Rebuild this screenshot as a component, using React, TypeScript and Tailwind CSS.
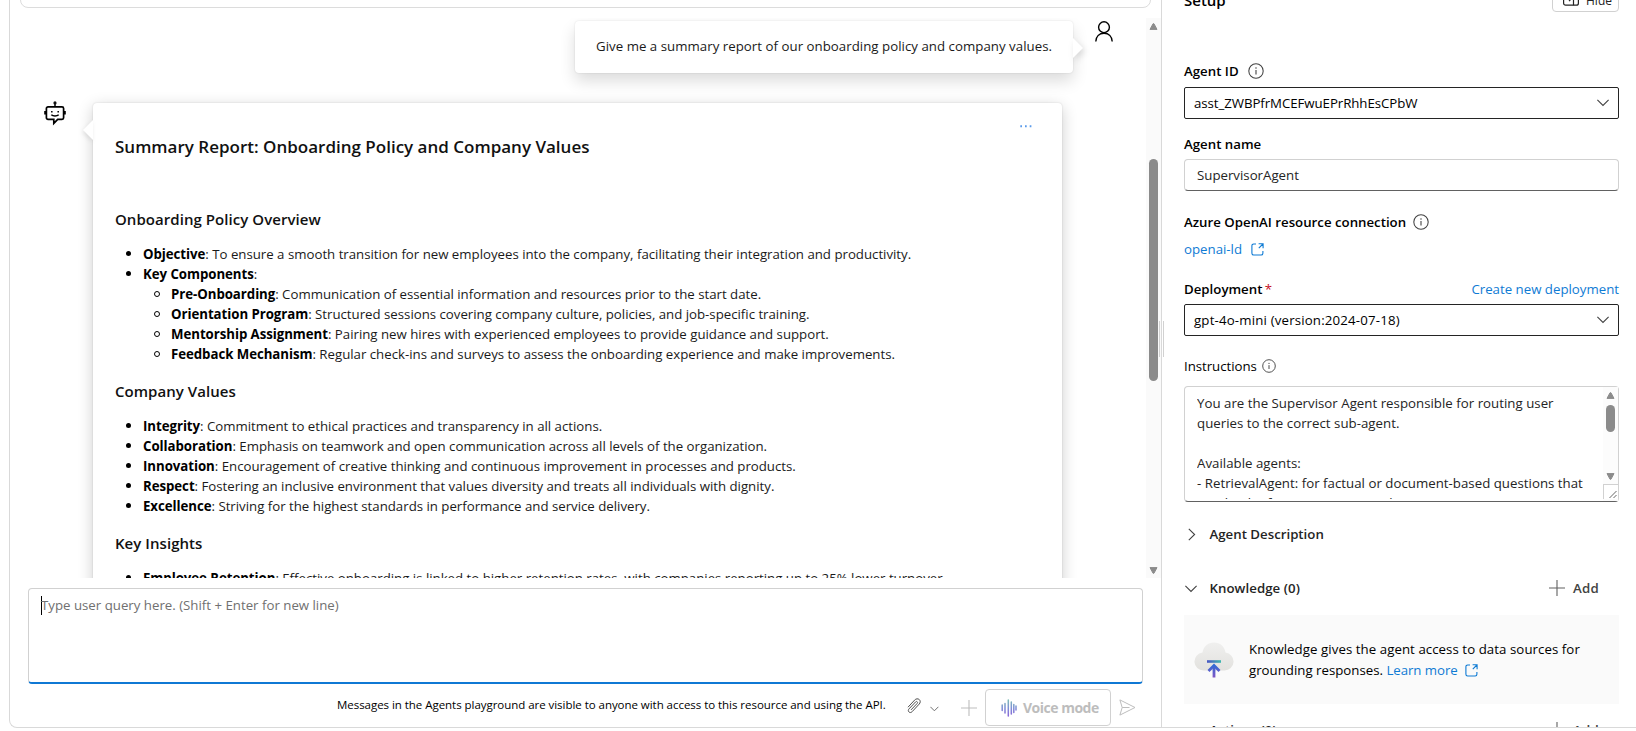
import type { ReactNode } from "react";

function InfoIcon({ size = 16 }: { size?: number }) {
  return (
    <svg width={size} height={size} viewBox="0 0 16 16" fill="none" className="shrink-0">
      <circle cx="8" cy="8" r="7.2" stroke="#424242" strokeWidth="1.05" />
      <path d="M8 7v4.4" stroke="#424242" strokeWidth="1.1" />
      <circle cx="8" cy="4.9" r="0.75" fill="#424242" />
    </svg>
  );
}

function ChevronDown({ className = "" }: { className?: string }) {
  return (
    <svg width="12" height="8" viewBox="0 0 12 8" fill="none" className={`shrink-0 ${className}`}>
      <path d="M0.4 0.9 6 6.5 11.6 0.9" stroke="#424242" strokeWidth="1.1" />
    </svg>
  );
}

function OpenIcon() {
  return (
    <svg width="13" height="13" viewBox="0 0 13 13" fill="none" stroke="#0f7bd4" className="shrink-0">
      <path d="M5 1H2.6A1.7 1.7 0 0 0 .9 2.700v7.600A1.700 1.700 0 0 0 2.600 12h7.600a1.700 1.700 0 0 0 1.700-1.700V8" strokeWidth="1.1" />
      <path d="M7.600 .8h4.500v4.500M11.900 1 7.800 5.100" strokeWidth="1.1" />
    </svg>
  );
}

function PlusIcon({ color }: { color: string }) {
  return (
    <svg width="16" height="16" viewBox="0 0 16 16" fill="none" className="shrink-0">
      <path d="M8 0v16M0 8h16" stroke={color} strokeWidth="1.1" />
    </svg>
  );
}

function Arrow({ down = false }: { down?: boolean }) {
  return (
    <svg width="9" height="7" viewBox="0 0 9 7" className="shrink-0">
      <path
        d={down ? "M1 .6h7L5 6.200H4z" : "M4 .8h1L8 6.400H1z"}
        fill="#8b8b8b"
        stroke="#8b8b8b"
        strokeWidth="1"
        strokeLinejoin="round"
      />
    </svg>
  );
}

function BotIcon() {
  return (
    <svg width="22" height="25" viewBox="0 0 22 25" fill="none" className="shrink-0">
      <path d="M11 6V2" stroke="#111" strokeWidth="1.6" />
      <circle cx="11" cy="1.900" r="1.600" fill="#111" />
      <path
        d="M4 5.900h14a1.600 1.600 0 0 1 1.600 1.600v9.200a1.600 1.600 0 0 1-1.600 1.600h-4.300L9.800 22.300V18.300H4a1.600 1.600 0 0 1-1.600-1.600V7.500A1.600 1.600 0 0 1 4 5.900z"
        stroke="#000"
        strokeWidth="1.700"
      />
      <path d="M1.200 10v3.500M20.800 10v3.500" stroke="#000" strokeWidth="2" />
      <path d="M7.300 13.700c1.800 1.700 5.600 1.700 7.400 0" stroke="#000" strokeWidth="1.500" />
      <path d="M7.800 9.900v1.700M14.200 9.900v1.700" stroke="#000" strokeWidth="1.500" />
    </svg>
  );
}

function PersonIcon() {
  return (
    <svg width="18" height="21" viewBox="0 0 18 21" fill="none" stroke="#000" strokeWidth="1.400" className="shrink-0">
      <circle cx="9" cy="6.200" r="5.400" />
      <path d="M.8 20.500c.2-5 3.500-8.300 8.200-8.300s8 3.300 8.200 8.300" />
    </svg>
  );
}

function Item({ label, text, children }: { label: string; text?: string; children?: ReactNode }) {
  return (
    <li>
      <div className="flex h-5 pl-[11px] whitespace-nowrap">
        <span className="mt-[7px] mr-3 size-[5px] shrink-0 rounded-full bg-black" />
        <Entry label={label} text={text} />
      </div>
      {children}
    </li>
  );
}

function Entry({ label, text }: { label: string; text?: string }) {
  return (
    <p className="tracking-[-0.012px]">
      <b className="font-bold tracking-[-0.05px] text-black">{label}</b>:{text ? ` ${text}` : ""}
    </p>
  );
}

function SubItem({ label, text }: { label: string; text: string }) {
  return (
    <li className="flex h-5 pl-[39px] whitespace-nowrap">
      <span className="mt-[7px] mr-[11px] size-[6px] shrink-0 rounded-full border border-black" />
      <Entry label={label} text={text} />
    </li>
  );
}

function SubHeading({ children }: { children: ReactNode }) {
  return <h3 className="mt-4 mb-3.5 text-[15px] leading-[22px] font-semibold tracking-[0.05px] text-[#111]">{children}</h3>;
}

function Select({ value, className }: { value: string; className: string }) {
  return (
    <div className="flex h-8 items-center justify-between rounded-[2px] border border-[#242424] pr-[9px] pl-[9px] text-black">
      <span className={className}>{value}</span>
      <ChevronDown />
    </div>
  );
}

function Conversation() {
  return (
    <div className="flex h-[560px] overflow-hidden">
      <div className="w-[1136px] overflow-hidden">
        <div className="mt-[3px] flex justify-end pr-[33px]">
          <div className="relative mr-[22px] flex h-[52px] w-[498px] items-center rounded-[4px] bg-white pb-[2px] pl-[21px] tracking-[0.03px] whitespace-nowrap text-[#1a1a1a] shadow-[0_0_2px_rgba(0,0,0,0.12),0_8px_16px_rgba(0,0,0,0.14)]">
            Give me a summary report of our onboarding policy and company values.
            <svg width="10" height="20" viewBox="0 0 10 20" className="absolute top-[17px] left-full drop-shadow-[2px_3px_3px_rgba(0,0,0,0.14)]">
              <path d="M0 0 10 10 0 20z" fill="#fff" />
            </svg>
          </div>
          <PersonIcon />
        </div>
        <div className="mt-[28px] flex pl-[34px]">
          <BotIcon />
          <div className="relative mt-[2px] ml-[27px] h-[600px] w-[969px] rounded-[4px] bg-white px-[22px] pt-8 text-[#1a1a1a] shadow-[0_0_2px_rgba(0,0,0,0.14),0_4px_16px_rgba(0,0,0,0.2)]">
            <svg width="10" height="20" viewBox="0 0 10 20" className="absolute top-[17px] right-full drop-shadow-[-1px_2px_2px_rgba(0,0,0,0.1)]">
              <path d="M10 0 0 10l10 10z" fill="#fff" />
            </svg>
            <svg width="12" height="3" viewBox="0 0 12 3" className="absolute top-[22px] left-[927px]">
              <path d="M.3 .3h1.700v1.900H.3zM5 .3h1.700v1.900H5zM9.700 .3h1.700v1.900H9.700z" fill="#5b9bea" />
            </svg>
            <h2 className="mb-[49px] text-[17px] leading-6 font-semibold text-[#111]">
              Summary Report: Onboarding Policy and Company Values
            </h2>
            <SubHeading>Onboarding Policy Overview</SubHeading>
            <ul>
              <Item
                label="Objective"
                text="To ensure a smooth transition for new employees into the company, facilitating their integration and productivity."
              />
              <Item label="Key Components">
                <ul>
                  <SubItem label="Pre-Onboarding" text="Communication of essential information and resources prior to the start date." />
                  <SubItem label="Orientation Program" text="Structured sessions covering company culture, policies, and job-specific training." />
                  <SubItem label="Mentorship Assignment" text="Pairing new hires with experienced employees to provide guidance and support." />
                  <SubItem
                    label="Feedback Mechanism"
                    text="Regular check-ins and surveys to assess the onboarding experience and make improvements."
                  />
                </ul>
              </Item>
            </ul>
            <SubHeading>Company Values</SubHeading>
            <ul>
              <Item label="Integrity" text="Commitment to ethical practices and transparency in all actions." />
              <Item label="Collaboration" text="Emphasis on teamwork and open communication across all levels of the organization." />
              <Item label="Innovation" text="Encouragement of creative thinking and continuous improvement in processes and products." />
              <Item label="Respect" text="Fostering an inclusive environment that values diversity and treats all individuals with dignity." />
              <Item label="Excellence" text="Striving for the highest standards in performance and service delivery." />
            </ul>
            <SubHeading>Key Insights</SubHeading>
            <ul>
              <Item
                label="Employee Retention"
                text="Effective onboarding is linked to higher retention rates, with companies reporting up to 25% lower turnover"
              />
            </ul>
          </div>
        </div>
      </div>
      <div className="flex w-[15px] flex-col items-center bg-[#fafafa] pt-[5px] pb-1">
        <Arrow />
        <span className="mt-[129px] h-[222px] w-[9px] rounded-full bg-[#8b8b8b]" />
        <span className="grow" />
        <Arrow down />
      </div>
    </div>
  );
}

function VoiceIcon() {
  return (
    <svg width="16" height="18" viewBox="0 0 16 18" className="shrink-0">
      <defs>
        <linearGradient id="voice" x1="0" y1="0" x2="0" y2="18" gradientUnits="userSpaceOnUse">
          <stop offset="0" stopColor="#7cc0b4" />
          <stop offset="0.5" stopColor="#7f8fd6" />
          <stop offset="1" stopColor="#8a63d8" />
        </linearGradient>
      </defs>
      <path
        d="M1.200 6v5.500M4 4.500v9.500M7.300 1v16M10.300 3v12M12.800 5.500v8M15 7v4"
        stroke="url(#voice)"
        strokeWidth="1.500"
        strokeLinecap="round"
      />
    </svg>
  );
}

function Composer() {
  return (
    <div className="mt-[10px] pl-[18px]">
      <div className="flex h-24 w-[1115px] rounded-[4px] border border-[#d1d1d1] border-b-2 border-b-[#0f78d4] pt-[6px] pl-3 text-[#707070]">
        <span className="mt-px -mr-px h-[19px] w-px bg-black" />
        <span>Type user query here. (Shift + Enter for new line)</span>
      </div>
      <div className="mt-[5px] flex h-[37px] items-center">
        <p className="mb-[6px] ml-[309px] w-[550px] text-[11.500px] tracking-[-0.04px] whitespace-nowrap text-black">
          Messages in the Agents playground are visible to anyone with access to this resource and using the API.
        </p>
        <svg width="14" height="16" viewBox="0 0 14 16" fill="none" stroke="#505050" className="mt-[-4px] ml-[20px] shrink-0">
          <path
            d="M1 9.200 7.600 2.100c1.400-1.500 3.400-1.700 4.700-.5s1.200 3.100-.1 4.500l-7.100 7.600c-.9 1-2.200 1.100-3.100.3s-.9-2.100 0-3.100l6.600-7c.5-.5 1.100-.6 1.600-.1s.4 1.100 0 1.600L4 11.900"
            strokeWidth="1"
          />
        </svg>
        <svg width="9" height="6" viewBox="0 0 9 6" fill="none" className="mt-[3px] ml-[9px] shrink-0">
          <path d="M.4 .8 4.400 4.800 8.400 .8" stroke="#707070" />
        </svg>
        <span className="ml-[22px]">
          <PlusIcon color="#bdbdbd" />
        </span>
        <div className="ml-[8px] flex h-[37px] w-[126px] items-center rounded-[4px] border border-[#d1d1d1] pl-[15px] text-[14px] font-bold text-[#bdbdbd]">
          <VoiceIcon />
          <span className="ml-[6px] tracking-[-0.5px] whitespace-nowrap">Voice mode</span>
        </div>
        <svg width="17" height="17" viewBox="0 0 17 17" fill="none" stroke="#bdbdbd" className="ml-[8px] shrink-0">
          <path d="M.9 .9 16 8.500 .9 16.100 3.200 8.500zM3.200 8.500H10.500" strokeLinejoin="round" />
        </svg>
      </div>
    </div>
  );
}

function CloudIcon() {
  return (
    <svg width="40" height="37" viewBox="0 0 40 37" className="shrink-0">
      <defs>
        <linearGradient id="cloud" x1="20" y1="0" x2="20" y2="29" gradientUnits="userSpaceOnUse">
          <stop offset="0" stopColor="#f0f0ef" />
          <stop offset="1" stopColor="#e2e1de" />
        </linearGradient>
        <linearGradient id="bar" x1="13" y1="0" x2="27" y2="0" gradientUnits="userSpaceOnUse">
          <stop offset="0" stopColor="#4a55c4" />
          <stop offset="1" stopColor="#3fb8ae" />
        </linearGradient>
        <linearGradient id="lift" x1="20" y1="22" x2="20" y2="36" gradientUnits="userSpaceOnUse">
          <stop offset="0" stopColor="#2b6bd6" />
          <stop offset="1" stopColor="#8455c4" />
        </linearGradient>
      </defs>
      <path d="M9.500 28.500a9 9 0 0 1-1-17.950C9.300 4.500 14 .5 20 .5s10.700 4 11.500 10.050a9 9 0 0 1-1 17.950z" fill="url(#cloud)" />
      <path d="M13 18.200h14v2.600H13z" fill="url(#bar)" />
      <path d="M14.500 29 20 23.500 25.500 29" fill="none" stroke="url(#lift)" strokeWidth="2.800" />
      <path d="M18.600 24.500h2.800v11h-2.800z" fill="url(#lift)" />
    </svg>
  );
}

function Section({ title, className }: { title: string; className: string }) {
  return (
    <div className={`flex h-5 items-center ${className}`}>
      <ChevronDown className="mt-0.5 ml-px" />
      <span className="ml-[12.500px] font-semibold tracking-[0.05px]">{title}</span>
      <span className="ml-auto">
        <PlusIcon color="#616161" />
      </span>
      <span className="mr-[19px] ml-[8px] w-[27px] font-semibold tracking-[0.3px] text-[#424242]">Add</span>
    </div>
  );
}

function Setup() {
  return (
    <div className="h-[727px] w-[475px] overflow-hidden pl-[22px]">
      <div className="w-[435px] text-[#242424]">
        <div className="-mt-3 flex h-6 items-center justify-between">
          <h1 className="text-[15px] font-semibold text-black">Setup</h1>
          <div className="flex h-6 w-[67px] items-center rounded-[4px] border border-[#d1d1d1] pt-[2px] pl-[10px] text-[12px]">
            <svg width="16" height="14" viewBox="0 0 16 14" fill="none" stroke="#242424" strokeWidth="1.2" className="-mt-1 mr-[7px]">
              <rect x=".6" y=".6" width="14.800" height="12.600" rx="2" />
              <path d="M10.500 .6v12.600M3 6.900h5M6 4.700l2.200 2.200L6 9.100" />
            </svg>
            Hide
          </div>
        </div>

        <div className="mt-[49px] flex h-5 items-center gap-[9px] font-semibold text-black">
          Agent ID <InfoIcon />
        </div>
        <div className="mt-1.5">
          <Select value="asst_ZWBPfrMCEFwuEPrRhhEsCPbW" className="tracking-[-0.06px]" />
        </div>

        <div className="mt-[15px] font-semibold text-black">Agent name</div>
        <div className="mt-[5px] flex h-8 items-center rounded-[4px] border border-[#d1d1d1] border-b-[#616161] pl-3">SupervisorAgent</div>

        <div className="mt-[21px] flex h-5 items-center gap-[7px] font-semibold text-black">
          Azure OpenAI resource connection <InfoIcon />
        </div>
        <div className="mt-[7px] flex h-5 items-center gap-[9px] text-[#0f7bd4]">
          openai-ld <OpenIcon />
        </div>

        <div className="mt-5 flex h-5 justify-between">
          <span className="font-semibold text-black">
            Deployment <span className="-ml-px font-normal text-[#c50f1f]">*</span>
          </span>
          <span className="text-[#0f7bd4]">Create new deployment</span>
        </div>
        <div className="mt-[5px]">
          <Select value="gpt-4o-mini (version:2024-07-18)" className="tracking-[0.17px]" />
        </div>

        <div className="mt-5 flex h-5 items-center gap-[5px] text-black">
          <span className="tracking-[-0.04px]">Instructions</span> <InfoIcon size={14} />
        </div>
        <div className="mt-2.5 flex h-[116px] justify-between rounded-[4px] border border-[#d1d1d1] border-b-[#616161] pl-3">
          <div className="mt-[6px] h-[106px] overflow-hidden tracking-[0.02px] whitespace-nowrap">
            <p>You are the Supervisor Agent responsible for routing user</p>
            <p>queries to the correct sub-agent.</p>
            <p>&nbsp;</p>
            <p>Available agents:</p>
            <p>- RetrievalAgent: for factual or document-based questions that</p>
            <p>need to be from Azure AI Search.</p>
          </div>
          <div className="flex w-[15px] flex-col items-center bg-[#fcfcfc] pt-[5px]">
            <Arrow />
            <span className="mt-[6px] h-[27px] w-[9px] rounded-full bg-[#8b8b8b]" />
            <span className="mt-[41px]" />
            <Arrow down />
            <div className="mt-[4px] flex h-[15px] w-[15px] items-end justify-end border-t border-l border-[#d1d1d1] bg-white">
              <svg width="9" height="9" viewBox="0 0 9 9" stroke="#555" strokeWidth="0.9">
                <path d="M.5 8 7.500 1M4.500 8 7.500 5" />
              </svg>
            </div>
          </div>
        </div>

        <div className="mt-[22px] flex h-5 items-center">
          <svg width="8" height="13" viewBox="0 0 8 13" fill="none" className="ml-[4px]">
            <path d="M.8 .8 6.600 6.500 .8 12.200" stroke="#424242" strokeWidth="1.100" />
          </svg>
          <span className="ml-[13.500px] font-semibold">Agent Description</span>
        </div>

        <Section title="Knowledge (0)" className="mt-[34px]" />
        <div className="mt-[17px] flex h-[89px] items-center bg-[#fafafa] pl-[10px]">
          <span className="mt-[2px]">
            <CloudIcon />
          </span>
          <div className="ml-[15px] leading-[21px] whitespace-nowrap text-black">
            <p className="tracking-[0.06px]">Knowledge gives the agent access to data sources for</p>
            <p className="flex items-center">
              grounding responses.&nbsp;<span className="mr-[7px] tracking-[-0.05px] text-[#0f7bd4]">Learn more</span>
              <OpenIcon />
            </p>
          </div>
        </div>
        <Section title="Actions (0)" className="mt-4" />
      </div>
    </div>
  );
}

export default function App() {
  return (
    <div className="h-[731px] w-[1636px] overflow-hidden bg-white pl-[9px] font-['Open_Sans','Noto_Sans',sans-serif] text-[13.25px] leading-5">
      <div className="relative flex h-[728px] rounded-bl-lg border-b border-l border-[#d9d9d9]">
        <div className="w-[1152px] shrink-0 border-r border-[#d9d9d9]">
          <div className="h-[18px] overflow-hidden pl-[10px]">
            <div className="-mt-8 h-10 w-[1131px] rounded-lg border border-[#dcdcdc]" />
          </div>
          <Conversation />
          <Composer />
        </div>
        <Setup />
        <div className="absolute top-[321px] left-[1149px] h-9 w-[5px] border-x border-[#d1d1d1]" />
      </div>
    </div>
  );
}
